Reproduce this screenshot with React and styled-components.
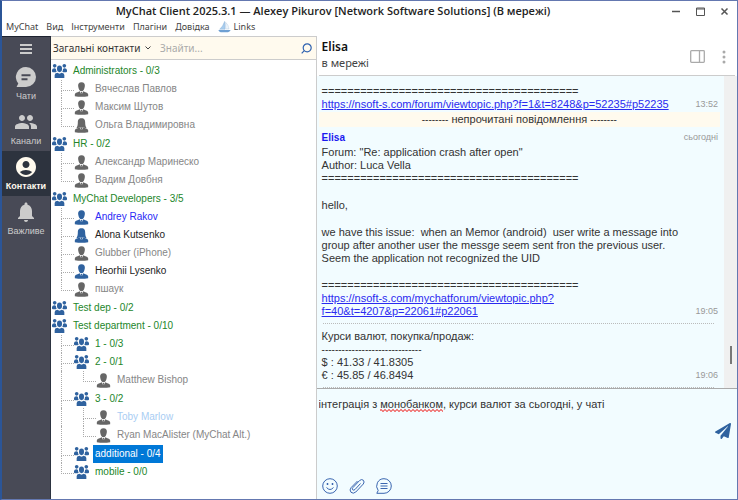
import React, {useLayoutEffect, useState} from 'react';
import styled, {createGlobalStyle} from 'styled-components';
import {MdPeople, MdAccountCircle, MdNotifications} from 'react-icons/md';
import {FaPaperPlane} from 'react-icons/fa';

const MENU = ['MyChat', 'Вид', 'Інструменти', 'Плагіни', 'Довідка'];

const NAV = [
    {label: 'Чати', icon: ChatsIcon},
    {label: 'Канали', icon: MdPeople},
    {label: 'Контакти', icon: MdAccountCircle, active: true},
    {label: 'Важливе', icon: MdNotifications},
];

const TREE = [
    {name: 'Administrators - 0/3', items: [
        {name: 'Вячеслав Павлов', user: true},
        {name: 'Максим Шутов', user: true},
        {name: 'Ольга Владимировна', user: true, female: true},
    ]},
    {name: 'HR - 0/2', items: [
        {name: 'Александр Маринеско', user: true},
        {name: 'Вадим Довбня', user: true},
    ]},
    {name: 'MyChat Developers - 3/5', items: [
        {name: 'Andrey Rakov', user: true, online: true, tone: 'me'},
        {name: 'Alona Kutsenko', user: true, online: true, female: true, tone: 'online'},
        {name: 'Glubber (iPhone)', user: true},
        {name: 'Heorhii Lysenko', user: true, online: true, tone: 'online'},
        {name: 'пшаук', user: true},
    ]},
    {name: 'Test dep - 0/2'},
    {name: 'Test department - 0/10', items: [
        {name: '1 - 0/3'},
        {name: '2 - 0/1', items: [{name: 'Matthew Bishop', user: true}]},
        {name: '3 - 0/2', items: [
            {name: 'Toby Marlow', user: true, tone: 'away'},
            {name: 'Ryan MacAlister (MyChat Alt.)', user: true},
        ]},
        {name: 'additional - 0/4', selected: true},
        {name: 'mobile - 0/0'},
    ]},
];

const TONES = {
    group: '#23862a',
    offline: '#868686',
    online: '#222',
    me: '#2a2af5',
    away: '#a9cdf3',
};

const RULE = '='.repeat(40);
const DRAFT = 'інтеграція з монобанком, курси валют за сьогодні, у чаті';
const DRAFT_FONT = '11px "Liberation Sans"';
const TYPO = 'монобанком';

function ChatsIcon(){
    return(
        <svg viewBox="0 0 24 24" width="24" height="24" fill="currentColor" aria-hidden="true">
            <path fillRule="evenodd" d="M12 2a10 10 0 0 1 0 20H2.5l1.8-3.6A10 10 0 0 1 12 2zM7.5 9.2v2h9v-2zM7.5 13.2v2h6v-2z" />
        </svg>
    )
}

function GroupIcon(){
    return(
        <svg viewBox="0 0 45 42" width="15" height="14" fill="#2f629f" aria-hidden="true">
            <circle cx="8" cy="5.500" r="5.500" />
            <circle cx="37" cy="5.500" r="5.500" />
            <path d="M0 22v-4q1-5 7-5 4 0 5 3 0 4 2 7l-3 2H3q-3 0-3-3z" />
            <path d="M45 22v-4q-1-5-7-5-4 0-5 3 0 4-2 7l3 2h8q3 0 3-3z" />
            <ellipse cx="22.500" cy="14.500" rx="7.500" ry="10" />
            <path d="M8 42V33q0-6 8-7l6.500 3 6.500-3q8 1 8 7v9z" />
        </svg>
    )
}

function PersonIcon({online, female}){
    return(
        <svg viewBox="0 0 42 45" width="14" height="15" fill={online ? '#2f629f' : '#666'} aria-hidden="true">
            {female
                ? <path d="M21 1C12 1 10 7 10 13c0 7-1 13-4 17q7 1 10-2 5 3 10 0 3 3 10 2c-3-4-4-10-4-17 0-6-2-12-11-12z" />
                : <path d="M21 1c-8 0-11 5-10 12 1 9 5 15 10 15s9-6 10-15c1-7-2-12-10-12z" />}
            <path d="M1 43V37q1-5 8-6l7-3 5 11 5-11 7 3q7 1 8 6v6q-20 3-40 0z" />
            <path d="M19 30h4l-1 4 1 5-2 3-2-3 1-5z" />
        </svg>
    )
}

function BoatIcon(){
    return(
        <svg viewBox="0 0 39 36" width="13" height="12" aria-hidden="true">
            <path d="M20 1q3 12 1 24H5Q15 16 20 1z" fill="#a9cdee" stroke="#7aa5cf" />
            <path d="M23 4q9 8 10 20H23z" fill="#eef5fb" stroke="#9bb8d3" />
            <path d="M1 27h37q-3 6-8 7H8q-5-1-7-7z" fill="#6fa0d3" />
        </svg>
    )
}

// guides: for every parent level, whether its line goes on below this row
function TreeNode({node, guides = [], last, root}){
    const tone = node.tone || (node.user ? 'offline' : 'group');
    return(
        <li>
            <TreeRow>
                {guides.map((open, i) => <Guide key={i} $open={open} />)}
                {!root && <Elbow $last={last} />}
                {node.user
                    ? <PersonIcon online={node.online} female={node.female} />
                    : <GroupIcon />}
                <NodeName $tone={tone} $selected={node.selected}>{node.name}</NodeName>
            </TreeRow>
            {node.items && (
                <Branch>
                    {node.items.map((item, i) => (
                        <TreeNode
                            key={item.name}
                            node={item}
                            guides={root ? [] : [...guides, !last]}
                            last={i === node.items.length - 1}
                        />
                    ))}
                </Branch>
            )}
        </li>
    )
}

function Composer(){
    const [text, setText] = useState(DRAFT);
    const [mark, setMark] = useState(null);

    useLayoutEffect(() => {
        const at = text.indexOf(TYPO);
        if(at < 0){
            setMark(null);
            return;
        }
        const ctx = document.createElement('canvas').getContext('2d');
        ctx.font = DRAFT_FONT;
        setMark({
            left: ctx.measureText(text.slice(0, at)).width,
            width: ctx.measureText(TYPO).width,
        });
    }, [text])

    return(
        <ComposerBox>
            <DraftArea>
                <Draft
                    aria-label="Повідомлення"
                    spellCheck={false}
                    value={text}
                    onChange={(e) => setText(e.target.value)}
                />
                {mark && <Squiggle style={mark} />}
            </DraftArea>
            <SendButton type="button" aria-label="Надіслати"><FaPaperPlane size={16} /></SendButton>
            <Tools>
                <ToolButton type="button" aria-label="Смайли">
                    <svg viewBox="0 0 16 16">
                        <circle cx="8" cy="8" r="7.300" />
                        <path d="M4.500 9.500q3.500 4 7 0" />
                        <path d="M5.500 5v2M10.500 5v2" strokeWidth="1.500" />
                    </svg>
                </ToolButton>
                <ToolButton type="button" aria-label="Прикріпити файл">
                    <svg viewBox="0 0 16 16">
                        <path d="M11.500 5.500 6 11.500q-1.400 1.200-2.300.3-.9-1 .3-2.300l6.600-7q2-1.700 3.700-.3 1.600 1.700 0 3.800l-7.500 8q-2.600 2.200-4.800.3-2-2.300.2-4.800L8.500 3" />
                    </svg>
                </ToolButton>
                <ToolButton type="button" aria-label="Швидкі відповіді">
                    <svg viewBox="0 0 16 16">
                        <path d="M8 .7a7.300 7.300 0 1 1 0 14.600H.8l1.400-2.800A7.300 7.300 0 0 1 8 .7z" />
                        <path d="M4.500 5.500h7M4.500 8h7M4.500 10.500h7" />
                    </svg>
                </ToolButton>
            </Tools>
        </ComposerBox>
    )
}

function App(){
    return(
        <Window>
            <GlobalStyle />
            <TitleBar>
                <Title>MyChat Client 2025.3.1 — Alexey Pikurov [Network Software Solutions] (В мережі)</Title>
                <WindowButtons>
                    <WindowButton aria-label="Згорнути">
                        <svg viewBox="0 0 9 9"><path d="M0 4.500h8" strokeWidth="1.500" /></svg>
                    </WindowButton>
                    <WindowButton aria-label="Розгорнути">
                        <svg viewBox="0 0 9 9"><path d="M.5 1h8v7.500h-8zM.5 2h8" /></svg>
                    </WindowButton>
                    <WindowButton aria-label="Закрити">
                        <svg viewBox="0 0 9 9"><path d="M1.500 1.500l6 6M7.500 1.500l-6 6" strokeWidth="1.500" /></svg>
                    </WindowButton>
                </WindowButtons>
            </TitleBar>
            <MenuBar>
                {MENU.map((item) => <MenuButton key={item}>{item}</MenuButton>)}
                <MenuButton><BoatIcon />Links</MenuButton>
            </MenuBar>
            <Body>
                <Rail>
                    <Burger aria-label="Меню"><i /><i /><i /></Burger>
                    {NAV.map(({label, icon: Icon, active}) => (
                        <RailButton key={label} $active={active}>
                            <Icon />
                            <span>{label}</span>
                        </RailButton>
                    ))}
                </Rail>
                <Contacts>
                    <SearchBar>
                        <ListSelect aria-label="Список контактів">
                            <option>Загальні контакти</option>
                        </ListSelect>
                        <Chevron viewBox="0 0 6 4" aria-hidden="true">
                            <path d="M.5.5 3 3 5.500.5" />
                        </Chevron>
                        <SearchInput aria-label="Пошук" placeholder="Знайти..." />
                        <SearchButton aria-label="Знайти">
                            <svg viewBox="0 0 11 11">
                                <circle cx="6.200" cy="4.800" r="4" />
                                <path d="M3.300 7.700.7 10.300" />
                            </svg>
                        </SearchButton>
                    </SearchBar>
                    <Tree>
                        {TREE.map((node) => <TreeNode key={node.name} node={node} root />)}
                    </Tree>
                </Contacts>
                <Chat>
                    <ChatHeader>
                        <div>
                            <ChatName>Elisa</ChatName>
                            <ChatStatus>в мережі</ChatStatus>
                        </div>
                        <HeaderButtons>
                            <HeaderButton aria-label="Бічна панель">
                                <svg viewBox="0 0 15 13" width="15" height="13">
                                    <path d="M.7 1.500q0-.8.8-.8h12q.8 0 .8.8v10q0 .8-.8.800h-12q-.8 0-.8-.800zM9.500.7v11.600" fill="none" stroke="#aaa" strokeWidth="1.300" />
                                </svg>
                            </HeaderButton>
                            <HeaderButton aria-label="Ще">
                                <svg viewBox="0 0 4 14" width="4" height="14" fill="#aaa">
                                    <circle cx="2" cy="2" r="1.500" />
                                    <circle cx="2" cy="7" r="1.500" />
                                    <circle cx="2" cy="12" r="1.500" />
                                </svg>
                            </HeaderButton>
                        </HeaderButtons>
                    </ChatHeader>
                    <History>
                        <Messages>
                            <Message>
                                <Text>
                                    <p>{RULE}<br /><a href="#p52235">https://nsoft-s.com/forum/viewtopic.php?f=1&amp;t=8248&amp;p=52235#p52235</a></p>
                                </Text>
                                <Time>13:52</Time>
                            </Message>
                            <Unread>
                                <Dashes>--------</Dashes> непрочитані повідомлення <Dashes>--------</Dashes>
                            </Unread>
                            <Sender>
                                <b>Elisa</b>
                                <Time>сьогодні</Time>
                            </Sender>
                            <Message>
                                <Text>
                                    <p>Forum: "Re: application crash after open"<br />Author: Luca Vella<br />{RULE}</p>
                                    <p>hello,</p>
                                    <p>{'we have this issue:  when an Memor (android)  user write a message into\ngroup after another user the messge seem sent fron the previous user.\nSeem the application not recognized the UID'}</p>
                                    <p>{RULE}<br /><a href="#p22061">https://nsoft-s.com/mychatforum/viewtopic.php?<br />f=40&amp;t=4207&amp;p=22061#p22061</a></p>
                                </Text>
                                <Time>19:05</Time>
                            </Message>
                            <Divider />
                            <Message>
                                <Text>
                                    <p>Курси валют, покупка/продаж:<br /><Dashes>{'-'.repeat(30)}</Dashes><br />$ : 41.33 / 41.8305<br />€ : 45.85 / 46.8494</p>
                                </Text>
                                <Time>19:06</Time>
                            </Message>
                            <Divider />
                        </Messages>
                        <Scrollbar><i /></Scrollbar>
                    </History>
                    <Composer />
                </Chat>
            </Body>
        </Window>
    )
}

export default App;

const GlobalStyle = createGlobalStyle`
    * {
        box-sizing: border-box;
    }

    body {
        margin: 0;
        font: 11px/13px "Liberation Sans", Arial, sans-serif;
        color: #333;
        background: #fff;
    }

    button, input, select, textarea {
        font: inherit;
        color: inherit;
        border: none;
        padding: 0;
        margin: 0;
        background: none;
        outline: none;
    }

    button {
        cursor: pointer;
    }

    p, ul, h1 {
        margin: 0;
        padding: 0;
        list-style: none;
    }
`
const Window = styled.div`
    display: flex;
    flex-direction: column;
    height: 100vh;
    min-height: 500px;
    border: 1px solid #6478b0;
    border-left: 2px solid #2b5597;
`
const TitleBar = styled.header`
    display: flex;
    align-items: center;
    height: 20px;
`
const Title = styled.h1`
    flex: 1;
    padding-right: 8px;
    text-align: center;
    font: 600 11px/20px "Open Sans", "Noto Sans", sans-serif;
    color: #222;
    white-space: nowrap;
`
const WindowButtons = styled.div`
    display: flex;
    gap: 15px;
    padding-right: 8px;
`
const WindowButton = styled.button`
    display: flex;

    svg {
        width: 9px;
        height: 9px;
        fill: none;
        stroke: #555;
    }
`
const MenuBar = styled.nav`
    display: flex;
    align-items: flex-start;
    gap: 8px;
    height: 15px;
    padding-left: 4px;
`
const MenuButton = styled.button`
    display: flex;
    align-items: center;
    gap: 3px;
    font: 9px/12px "Noto Sans", sans-serif;
    color: #444;
`
const Body = styled.div`
    display: flex;
    flex: 1;
    min-height: 0;
`
const Rail = styled.nav`
    display: flex;
    flex-direction: column;
    width: 49px;
    background: #484a56;
    border-top: 1px solid #1d2330;
    border-right: 1px solid #2c3340;
`
const Burger = styled.button`
    display: flex;
    flex-direction: column;
    align-items: center;
    justify-content: center;
    gap: 2px;
    height: 24px;

    i {
        width: 12px;
        height: 2px;
        background: #ccc;
    }
`
const RailButton = styled.button`
    display: flex;
    flex-direction: column;
    align-items: center;
    justify-content: center;
    gap: 1px;
    height: 45px;
    font-size: 9px;
    font-weight: ${(p) => (p.$active ? 700 : 400)};
    line-height: 12px;
    color: ${(p) => (p.$active ? '#fffaee' : '#ccc')};
    background: ${(p) => (p.$active ? '#2d333e' : 'transparent')};

    svg {
        width: 24px;
        height: 24px;
    }
`
const Contacts = styled.section`
    display: flex;
    flex-direction: column;
    flex: 0 0 36%;
    min-width: 0;
`
const SearchBar = styled.div`
    display: flex;
    align-items: center;
    height: 24px;
    padding: 0 4px 0 2px;
    background: #fffaee;
    border-top: 1px solid #ccc;
    border-bottom: 1px solid #ccc;
`
const ListSelect = styled.select`
    appearance: none;
    font: 10px/16px "Noto Sans", sans-serif;
    color: #333;
`
const Chevron = styled.svg`
    width: 6px;
    height: 4px;
    margin: 0 9px 0 4px;
    fill: none;
    stroke: #444;
`
const SearchInput = styled.input`
    flex: 1;
    width: 0;
    min-width: 0;
    font: 10px/16px "Noto Sans", sans-serif;

    &::placeholder {
        color: #aaa;
    }
`
const SearchButton = styled.button`
    display: flex;

    svg {
        width: 11px;
        height: 11px;
        fill: none;
        stroke: #2f62b0;
        stroke-width: 1.2;
    }
`
const Tree = styled.ul`
    flex: 1;
    padding-top: 2px;
    overflow: hidden;
    font-size: 10px;
`
const Branch = styled.ul`
    padding-bottom: 1px;
`
const TreeRow = styled.div`
    display: flex;
    align-items: center;
    height: 18px;
    padding-left: 1px;

    svg {
        flex: 0 0 15px;
    }
`
const Guide = styled.span`
    align-self: stretch;
    flex: 0 0 13px;
    margin-left: 9px;
    border-left: 1px ${(p) => (p.$open ? 'dotted' : 'none')} #aaa;
`
const Elbow = styled.span`
    display: flex;
    flex-direction: column;
    align-self: stretch;
    flex: 0 0 13px;
    margin-left: 9px;

    &::before {
        content: '';
        height: 10px;
        border-left: 1px dotted #aaa;
        border-bottom: 1px dotted #aaa;
    }

    &::after {
        content: '';
        flex: 1;
        border-left: 1px ${(p) => (p.$last ? 'none' : 'dotted')} #aaa;
    }
`
const NodeName = styled.span`
    margin-left: 4px;
    padding: 0 2px;
    line-height: 18px;
    white-space: nowrap;
    color: ${(p) => (p.$selected ? '#fff' : TONES[p.$tone])};
    background: ${(p) => (p.$selected ? '#0078d7' : 'none')};
`
const Chat = styled.main`
    display: flex;
    flex-direction: column;
    flex: 1;
    min-width: 0;
    border-left: 1px solid #ccc;
`
const ChatHeader = styled.header`
    display: flex;
    justify-content: space-between;
    height: 40px;
    margin: 0 2px;
    padding: 2px 9px 0 3px;
    border-bottom: 1px solid #ccc;
`
const ChatName = styled.div`
    font: 600 12px/18px "Noto Sans", sans-serif;
    color: #111;
`
const ChatStatus = styled.div`
    font: 11px/14px "Noto Sans", sans-serif;
    color: #444;
`
const HeaderButtons = styled.div`
    display: flex;
    gap: 17px;
`
const HeaderButton = styled.button`
    display: flex;
    align-items: center;
`
const History = styled.div`
    display: flex;
    flex: 1;
    min-height: 0;
    background: #f2fcff;
`
const Messages = styled.div`
    flex: 1;
    padding: 9px 4px 0 2px;
    overflow: hidden;
`
const Message = styled.article`
    display: flex;
    align-items: flex-end;
    justify-content: space-between;
    padding: 0 2px 0 3px;
`
const Text = styled.div`
    display: flex;
    flex-direction: column;
    gap: 14px;
    white-space: pre;

    a {
        color: #2a2af0;
    }
`
const Dashes = styled.span`
    font-size: 10px;
    line-height: 1;
`
const Time = styled.time`
    font-size: 9px;
    color: #999;
`
const Unread = styled.div`
    height: 15px;
    margin: 1px 0 4px;
    line-height: 15px;
    text-align: center;
    background: #fffaee;
`
const Sender = styled.div`
    display: flex;
    justify-content: space-between;
    padding: 0 2px 2px 3px;

    b {
        font-size: 10px;
        color: #1a1af0;
    }
`
const Divider = styled.hr`
    margin: 5px 6px 6px 4px;
    border: none;
    border-top: 1px dotted #bbb;
`
const Scrollbar = styled.div`
    display: flex;
    flex-direction: column;
    align-items: center;
    justify-content: flex-end;
    width: 13px;
    padding-bottom: 24px;
    background: #f0f0f0;

    i {
        width: 2px;
        height: 18px;
        background: #777;
    }
`
const ComposerBox = styled.form`
    display: grid;
    grid-template-columns: 1fr auto;
    grid-template-rows: 1fr auto;
    height: 111px;
    padding: 9px 6px 5px 2px;
    background: #f2fcff;
    border-top: 1px solid #aaa;
`
const DraftArea = styled.div`
    position: relative;
    display: flex;
`
const Draft = styled.textarea`
    flex: 1;
    resize: none;
    color: #333;
`
const Squiggle = styled.span`
    position: absolute;
    top: 11px;
    height: 3px;
    background:
        linear-gradient(45deg, transparent 40%, #f08080 40% 60%, transparent 60%) 0 0 / 4px 3px,
        linear-gradient(-45deg, transparent 40%, #f08080 40% 60%, transparent 60%) 2px 0 / 4px 3px;
`
const SendButton = styled.button`
    align-self: start;
    margin-top: 25px;
    color: #2f629f;
`
const Tools = styled.div`
    display: flex;
    gap: 11px;
    padding-left: 3px;
`
const ToolButton = styled.button`
    display: flex;

    svg {
        width: 16px;
        height: 16px;
        fill: none;
        stroke: #3a66b0;
        stroke-width: 1;
    }
`
